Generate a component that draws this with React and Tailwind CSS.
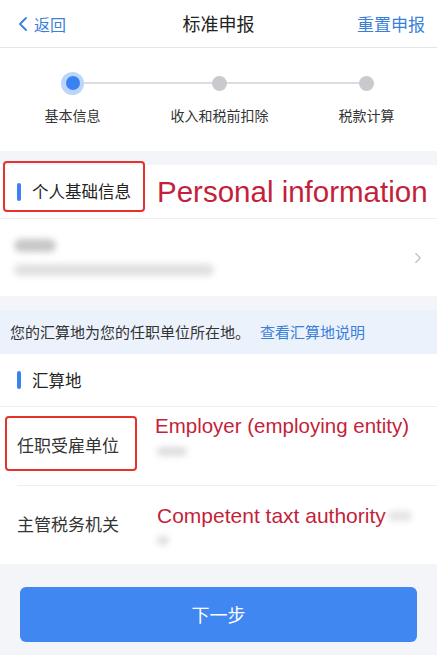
import { ChevronLeft, ChevronRight } from 'lucide-react';

const steps = ['基本信息', '收入和税前扣除', '税款计算'];

const SectionTitle = ({ children }) => (
    <div className="flex items-center pl-[17px]">
        <span className="w-[4px] h-[18px] rounded-full bg-[#3a82f2]" />
        <span className="ml-[11px] text-[16.5px] text-[#222]">{children}</span>
    </div>
);

const Blur = ({ className }) => <div className={`rounded-full blur-[3px] ${className}`} />;

const App = () => {
    return (
        <div className="w-full min-h-[655px] bg-[#f4f5f9] text-[#333] font-['Noto_Sans_CJK_SC','Noto_Sans',sans-serif] overflow-hidden">
            {/* Nav bar */}
            <div className="h-12 bg-white border-b border-[#e5e5e5] grid grid-cols-[1fr_auto_1fr] items-center px-[12px]">
                <div className="flex items-center text-[#3b7fd9] text-[16px]">
                    <ChevronLeft size={24} strokeWidth={1.8} className="-ml-[1px]" />
                    <span className="-ml-[1px]">返回</span>
                </div>
                <div className="text-[18px] text-[#222]">标准申报</div>
                <div className="text-right text-[#3b7fd9] text-[17px]">重置申报</div>
            </div>

            {/* Stepper */}
            <div className="bg-white h-[103px] relative overflow-hidden">
                <div className="absolute top-[34px] left-[72px] right-[70px] h-[2px] bg-[#dcdde2]" />
                <div className="flex -ml-[1px] pt-[24px] relative">
                    {steps.map((s, i) => (
                        <div key={s} className="w-[147px] shrink-0 flex flex-col items-center">
                            <div className="h-[22px] flex items-center justify-center">
                                {i === 0 ? (
                                    <div className="w-[23px] h-[23px] rounded-full bg-[#bcd5fa] flex items-center justify-center">
                                        <div className="w-[14px] h-[14px] rounded-full bg-[#3a82f2]" />
                                    </div>
                                ) : (
                                    <div className="w-[15px] h-[15px] rounded-full bg-[#c9cace]" />
                                )}
                            </div>
                            <div className="mt-[11px] text-[14px] leading-5 text-[#333]">{s}</div>
                        </div>
                    ))}
                </div>
            </div>

            <div className="h-[14px]" />

            {/* Personal info */}
            <div className="bg-white">
                <div className="h-[53px] flex items-center relative">
                    <div className="absolute left-[3px] top-[-4px] w-[142px] h-[51px] border-2 border-[#e5322d] rounded-[4px]" />
                    <div className="w-[157px] shrink-0">
                        <SectionTitle>个人基础信息</SectionTitle>
                    </div>
                    <span className="text-[29.5px] leading-none text-[#c41f3b] font-['Liberation_Sans',Arial,sans-serif]">
                        Personal information
                    </span>
                </div>
                <div className="h-[78px] border-t border-[#eeeeee] flex items-center pl-[14px] pr-[10px]">
                    <div className="flex-1 flex flex-col gap-[12px]">
                        <Blur className="w-[42px] h-[13px] bg-[#c7c7c7]" />
                        <Blur className="w-[200px] h-[12px] bg-[#e0e0e0]" />
                    </div>
                    <ChevronRight size={18} strokeWidth={1.5} className="text-[#bdbdbd]" />
                </div>
            </div>

            <div className="h-[14px]" />

            {/* Notice band */}
            <div className="h-[44px] bg-[#ebf2fc] flex items-center px-[10px] text-[15px] text-[#333]">
                您的汇算地为您的任职单位所在地。
                <span className="ml-[10px] text-[#3b7fd9]">查看汇算地说明</span>
            </div>

            {/* Settlement place */}
            <div className="bg-white">
                <div className="h-[52px] flex items-center">
                    <SectionTitle>汇算地</SectionTitle>
                </div>
                <div className="h-[79px] border-t border-[#eeeeee] flex items-center relative">
                    <div className="absolute left-[5px] top-[9px] w-[132px] h-[55px] border-2 border-[#e5322d] rounded-[4px]" />
                    <div className="w-[155px] shrink-0 pl-[17px] text-[17px] text-[#333] -mt-[2px]">任职受雇单位</div>
                    <div className="flex flex-col">
                        <span className="text-[20.5px] leading-none text-[#c41f3b] font-['Liberation_Sans',Arial,sans-serif] -mt-[20px]">
                            Employer (employing entity)
                        </span>
                        <Blur className="mt-[10px] ml-[2px] w-[30px] h-[9px] bg-[#dcdcdc]" />
                    </div>
                </div>
                <div className="ml-[17px] border-t border-[#eeeeee]" />
                <div className="h-[78px] flex items-center">
                    <div className="w-[157px] shrink-0 pl-[17px] text-[17px] text-[#333] -mt-[2px]">主管税务机关</div>
                    <div className="flex flex-col">
                        <div className="flex items-center">
                            <span className="text-[21px] leading-none text-[#c41f3b] font-['Liberation_Sans',Arial,sans-serif]">
                                Competent taxt authority
                            </span>
                            <Blur className="ml-[2px] w-[24px] h-[10px] bg-[#e3e3e3]" />
                        </div>
                        <Blur className="mt-[10px] w-[12px] h-[9px] bg-[#dcdcdc]" />
                    </div>
                </div>
            </div>

            {/* Next button */}
            <div className="pt-[23px] px-[20px] pb-[14px]">
                <button className="w-full h-[55px] rounded-[6px] bg-[#4187f2] text-white text-[18px]">
                    下一步
                </button>
            </div>
        </div>
    );
};

export default App;
